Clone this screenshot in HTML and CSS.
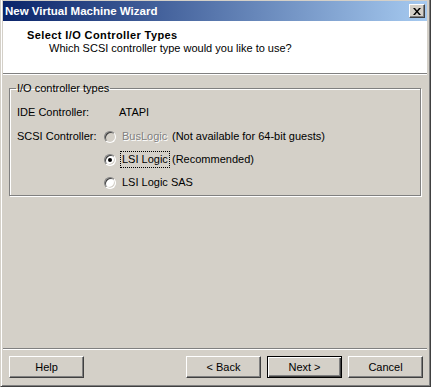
FILE: index.html
```html
<!DOCTYPE html>
<html lang="en">
  <head>
    <meta charset="UTF-8">
    <title>New Virtual Machine Wizard</title>
    <link rel="stylesheet" href="styles.css">
  </head>
  <body>
    <div class="window">
        <div class="titlebar">
            <span class="title">New Virtual Machine Wizard</span>
            <span class="close">
                <svg width="8" height="7" viewBox="0 0 8 7">
                    <path d="M0 0h2l2 2.5L6 0h2L5 3.5 8 7H6L4 4.5 2 7H0l3-3.5z" fill="#000"/>
                </svg>
            </span>
        </div>

        <div class="header">
            <div class="header-title">Select I/O Controller Types</div>
            <div class="header-sub">Which SCSI controller type would you like to use?</div>
        </div>
        <div class="sep"></div>

        <div class="content">
            <fieldset class="group">
                <legend>I/O controller types</legend>
                <div class="rows">
                    <div class="row-label first">IDE Controller:</div>
                    <div class="row-value first">ATAPI</div>

                    <div class="row-label">SCSI Controller:</div>
                    <div class="option disabled"><span class="radio"></span><span class="opt-text">BusLogic</span></div>
                    <div class="note">(Not available for 64-bit guests)</div>

                    <div class="row-label"></div>
                    <div class="option"><span class="radio checked"></span><span class="opt-text focus">LSI Logic</span></div>
                    <div class="note">(Recommended)</div>

                    <div class="row-label"></div>
                    <div class="option wide"><span class="radio"></span><span class="opt-text">LSI Logic SAS</span></div>
                </div>
            </fieldset>
        </div>

        <div class="sep"></div>
        <div class="footer">
            <button class="btn">Help</button>
            <div class="spacer"></div>
            <button class="btn">&lt; Back</button>
            <button class="btn default">Next &gt;</button>
            <button class="btn">Cancel</button>
        </div>
    </div>
  </body>
</html>
```

FILE: styles.css
```css
* {
    box-sizing: border-box;
}
body {
    margin: 0;
    background: #d4d0c8;
    font-family: "Liberation Sans", Arial, sans-serif;
    font-size: 11px;
    color: #000;
}
.window {
    width: 431px;
    height: 387px;
    display: flex;
    flex-direction: column;
    background: #d4d0c8;
    border-left: 1px solid #d4d0c8;
    border-right: 1px solid #404040;
    border-bottom: 1px solid #404040;
    box-shadow: inset 1px 0 #fff, inset -1px -1px #808080;
    padding: 1px 3px 3px 2px;
}
.titlebar {
    height: 20px;
    display: flex;
    align-items: center;
    justify-content: space-between;
    padding: 0 2px 0 2px;
    background: linear-gradient(to right, #0a246a, #a6caf0);
}
.title {
    color: #fff;
    font-weight: bold;
    font-size: 11.5px;
}
.close {
    width: 16px;
    height: 14px;
    display: flex;
    align-items: center;
    justify-content: center;
    background: #d4d0c8;
    border: 1px solid;
    border-color: #fff #404040 #404040 #fff;
    box-shadow: inset -1px -1px #808080;
}
.header {
    height: 52px;
    background: #fff;
    padding: 8px 0 0 24px;
    line-height: 13px;
}
.header-title {
    font-weight: bold;
    letter-spacing: 0.4px;
}
.header-sub {
    margin-left: 22px;
}
.sep {
    height: 2px;
    border-top: 1px solid #808080;
    border-bottom: 1px solid #fff;
}
.content {
    flex: 1;
    padding: 7px 6px 0 6px;
}
.group {
    margin: 0;
    padding: 7px 6px 1px 7px;
    border: 1px solid #808080;
    box-shadow: 1px 1px 0 #fff, inset 1px 1px 0 #fff;
    min-inline-size: 0;
}
.group legend {
    padding: 0 1px;
    margin-left: -1px;
    line-height: 13px;
}
.rows {
    display: grid;
    grid-template-columns: 86px 69px 1fr;
    grid-auto-rows: 23px;
    align-items: center;
    white-space: nowrap;
}
.row-label,
.row-value,
.note,
.opt-text {
    line-height: 13px;
}
.row-value {
    grid-column: 2 / 4;
    padding-left: 16px;
}
.first {
    margin-top: -2px;
}
.option {
    display: flex;
    align-items: center;
}
.option.wide {
    grid-column: 2 / 4;
}
.radio {
    position: relative;
    width: 12px;
    height: 12px;
    margin-left: 1px;
    border-radius: 50%;
    border: 1px solid;
    border-color: #808080 #fff #fff #808080;
    box-shadow: inset 1px 1px #404040, inset -1px -1px #d4d0c8;
    background: #fff;
}
.radio.checked::after {
    content: "";
    position: absolute;
    left: 3px;
    top: 3px;
    width: 4px;
    height: 4px;
    border-radius: 50%;
    background: #000;
}
.opt-text {
    margin-left: 4px;
    padding: 1px 1px;
    border: 1px dotted transparent;
}
.opt-text.focus {
    border-color: #000;
}
.disabled .radio {
    background: #d4d0c8;
}
.disabled .opt-text {
    color: #808080;
    text-shadow: 1px 1px #fff;
}
.footer {
    display: flex;
    align-items: flex-start;
    gap: 6px;
    padding: 6px 4px 0 6px;
    height: 33px;
}
.spacer {
    flex: 1;
}
.btn {
    width: 75px;
    height: 22px;
    font-family: inherit;
    font-size: 11px;
    color: #000;
    background: #d4d0c8;
    border: 1px solid;
    border-color: #fff #404040 #404040 #fff;
    box-shadow: inset -1px -1px #808080;
    padding: 0;
    cursor: pointer;
}
.btn.default {
    border: 1px solid #000;
    box-shadow: inset 1px 1px #fff, inset -1px -1px #404040, inset -2px -2px #808080;
}
```
